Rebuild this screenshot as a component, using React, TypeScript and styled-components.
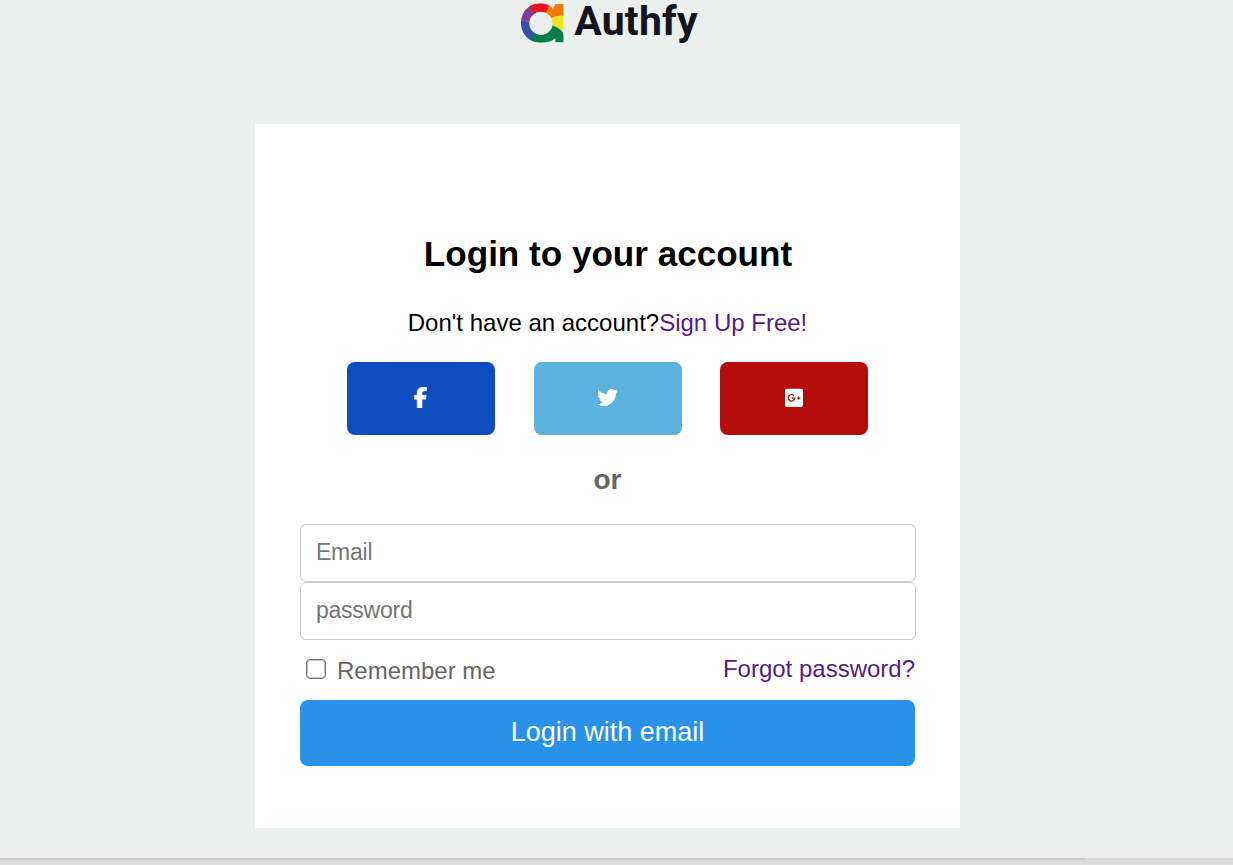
import React from "react";
import styled, { createGlobalStyle } from "styled-components";
import { FaFacebookF, FaTwitter } from "react-icons/fa6";

const GlobalStyle = createGlobalStyle`
  * { box-sizing: border-box; }
  body {
    margin: 0;
    background: #ebefee;
    font-family: "Liberation Sans", Arial, sans-serif;
    font-size: 24px;
    overflow: hidden;
  }
`;

const Page = styled.div`
  height: 865px;
  display: flex;
  flex-direction: column;
`;

const Main = styled.main`
  flex: 1;
  width: 1215px;
  display: flex;
  flex-direction: column;
  align-items: center;
`;

const Brand = styled.header`
  height: 124px;
  padding-left: 3px;
  display: flex;
  align-items: flex-start;
`;

const BrandName = styled.span`
  margin-left: 10px;
  font: 700 41px/42px Roboto, sans-serif;
  letter-spacing: 0.2px;
  color: #14141f;
`;

const Card = styled.section`
  width: 705px;
  height: 704px;
  padding: 109px 45px 0;
  background: #fff;
  display: flex;
  flex-direction: column;
`;

const Title = styled.h1`
  margin: 0;
  padding-left: 1px;
  font-size: 35.1px;
  line-height: 42px;
  text-align: center;
`;

const Prompt = styled.p`
  margin: 34px 0 0;
  line-height: 28px;
  text-align: center;
`;

const Link = styled.a`
  color: #551a8b;
  text-decoration: none;
  line-height: 28px;
`;

const SocialRow = styled.div`
  margin: 25px 47px 0;
  display: flex;
  justify-content: space-between;
`;

const SocialButton = styled.button<{ $color: string }>`
  width: 148px;
  height: 73px;
  padding: 0 0 2px;
  border: 0;
  border-radius: 8px;
  background: ${(p) => p.$color};
  color: #fff;
  display: flex;
  align-items: center;
  justify-content: center;
`;

const FacebookIcon = styled(FaFacebookF)`
  margin-right: 1px;
  stroke: currentColor;
  stroke-width: 14px;
`;

const Divider = styled.h2`
  margin: 28px 0 0;
  height: 61px;
  font-size: 28px;
  line-height: 34px;
  color: #666;
  text-align: center;
`;

const Field = styled.input`
  width: 616px;
  height: 58px;
  padding: 0 15px 2px;
  border: 1px solid #ccc;
  border-radius: 6px;
  background: #fff;
  font: 23px "Liberation Sans", Arial, sans-serif;
  letter-spacing: -0.25px;
  &::placeholder { color: #757575; }
`;

const Options = styled.div`
  height: 60px;
  padding: 15px 0 0 6px;
  display: flex;
  align-items: flex-start;
  justify-content: space-between;
`;

const Remember = styled.label`
  display: flex;
  align-items: flex-start;
  gap: 11px;
  color: #666;
  line-height: 32px;
`;

const Check = styled.input`
  appearance: none;
  width: 20px;
  height: 20px;
  margin: 4px 0 0;
  border: 1px solid #767676;
  border-radius: 4px;
  background: #fff;
  box-shadow: inset 0 0 0 1px #c4c4c4;
`;

const Submit = styled.button`
  height: 66px;
  padding: 0 0 2px;
  border: 0;
  border-radius: 8px;
  background: #2892eb;
  color: #fff;
  font: 27px "Liberation Sans", Arial, sans-serif;
`;

const Scrollbar = styled.footer`
  height: 7px;
  background: #dcdcdc;
`;

const ScrollThumb = styled.div`
  width: 1085px;
  height: 2px;
  background: #cbcbcb;
`;

const LogoMark = () => (
  <svg width="44" height="46" viewBox="0 0 132 138">
    <defs>
      <clipPath id="mark">
        <path
          clipRule="evenodd"
          d="M62 10C76 10 90 16 99 26L106 12H131V127H106V114C97 124 78 128 62 128C28 128 3 102 3 69C3 36 28 10 62 10ZM63 35A35 35 0 1 0 63 105A35 35 0 1 0 63 35Z"
        />
      </clipPath>
    </defs>
    <g clipPath="url(#mark)">
      <path fill="#7c3b92" d="M63 70L0 61V0H26Z" />
      <path fill="#e7131d" d="M63 70L22 11V0H98Z" />
      <path fill="#f07c08" d="M63 70L95 0H132V48Q108 46 98 54Z" />
      <path fill="#f3e51c" d="M63 70L97 54Q111 46 132 48V92Q116 86 98 76Z" />
      <path fill="#067f46" d="M63 70L97 76Q132 88 132 110V138H18Z" />
      <path fill="#3351a2" d="M63 70L24 138H0V61Z" />
    </g>
  </svg>
);

const GooglePlusIcon = () => (
  <svg width="24" height="24" viewBox="0 0 24 24">
    <rect x="3" y="2.8" width="18" height="18.3" rx="2" fill="#fff" />
    <path
      d="M12 9.8A3.2 3.2 0 1 0 12.7 12.1H9.6"
      fill="none"
      stroke="#b30c0a"
      strokeWidth="1.3"
    />
    <path d="M14.9 12.1H18.3M16.6 10.4V13.8" stroke="#b30c0a" strokeWidth="1.1" />
  </svg>
);

export default function App() {
  return (
    <Page>
      <GlobalStyle />
      <Main>
        <Brand>
          <LogoMark />
          <BrandName>Authfy</BrandName>
        </Brand>
        <Card>
          <Title>Login to your account</Title>
          <Prompt>
            Don't have an account?<Link>Sign Up Free!</Link>
          </Prompt>
          <SocialRow>
            <SocialButton $color="#0c4dc0" aria-label="Facebook">
              <FacebookIcon size={21} />
            </SocialButton>
            <SocialButton $color="#5cb2de" aria-label="Twitter">
              <FaTwitter size={21} />
            </SocialButton>
            <SocialButton $color="#b30c0a" aria-label="Google Plus">
              <GooglePlusIcon />
            </SocialButton>
          </SocialRow>
          <Divider>or</Divider>
          <Field type="email" placeholder="Email" />
          <Field type="password" placeholder="password" />
          <Options>
            <Remember>
              <Check type="checkbox" />
              Remember me
            </Remember>
            <Link>Forgot password?</Link>
          </Options>
          <Submit>Login with email</Submit>
        </Card>
      </Main>
      <Scrollbar>
        <ScrollThumb />
      </Scrollbar>
    </Page>
  );
}
